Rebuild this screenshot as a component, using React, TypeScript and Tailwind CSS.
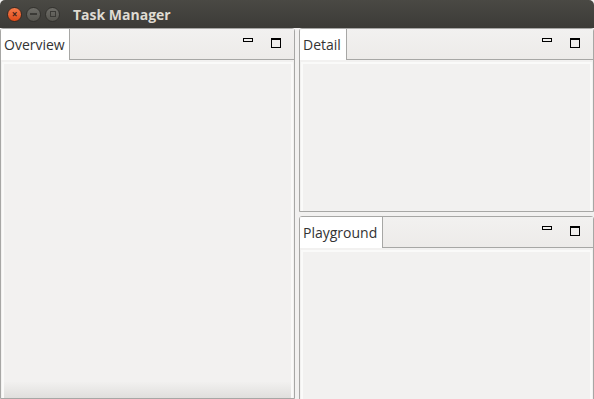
const WinIcons = () => (
  <div className="flex items-start gap-[18px] pt-[9px] pr-[13px]">
    <div className="w-[10px] h-[4px] border border-black" />
    <div className="w-[10px] h-[10px] border border-black border-t-2" />
  </div>
);

const Pane = ({
  title,
  tabWidth,
  className,
  shade,
}: {
  title: string;
  tabWidth: string;
  className: string;
  shade?: boolean;
}) => (
  <div className={`flex flex-col shrink-0 border border-[#a7a7a5] rounded-t-[3px] bg-[#f2f1f0] ${className}`}>
    <div className="flex h-[31px] shrink-0 border-b border-[#a7a7a5] bg-gradient-to-b from-[#f2f1f0] to-[#edebe9]">
      <div
        className={`${tabWidth} h-[31px] bg-white border-r border-[#a7a7a5] rounded-tl-[3px] flex items-center pl-[3px] text-[14px] text-[#333333] -mb-px`}
      >
        {title}
      </div>
      <div className="flex-1" />
      <WinIcons />
    </div>
    <div
      className={`flex-1 mt-[2px] mx-px border-2 border-[#fafaf9] border-b-0 ${
        shade ? "bg-gradient-to-b from-[#f2f1f0] from-[95%] to-[#e0dfdd]" : "bg-[#f2f1f0]"
      }`}
    />
  </div>
);

export default function App() {
  return (
    <div
      className="w-[594px] h-[399px] overflow-hidden flex flex-col bg-[#f2f1f0]"
      style={{ fontFamily: '"Open Sans", "Noto Sans", sans-serif' }}
    >
      <div className="h-[28px] shrink-0 flex items-center bg-gradient-to-b from-[#4a4944] to-[#3c3b37] rounded-t-[5px]">
        <div className="flex gap-[4px] pl-[7px]">
          <div className="w-[15px] h-[15px] rounded-full bg-gradient-to-b from-[#f47b4a] to-[#df4a16] border border-[#3a2a22] flex items-center justify-center text-[10px] leading-none text-[#41231a] font-bold">
            ×
          </div>
          <div className="w-[15px] h-[15px] rounded-full bg-gradient-to-b from-[#6e6d68] to-[#56554f] border border-[#33322e] flex items-center justify-center">
            <div className="w-[7px] h-[2px] bg-[#3b3a36]" />
          </div>
          <div className="w-[15px] h-[15px] rounded-full bg-gradient-to-b from-[#6e6d68] to-[#56554f] border border-[#33322e] flex items-center justify-center">
            <div className="w-[6px] h-[6px] border border-[#3b3a36]" />
          </div>
        </div>
        <div className="ml-[13px] text-[14px] font-bold text-[#dfdbd2]">Task Manager</div>
      </div>
      <div className="flex-1 flex gap-[4px] min-h-0">
        <Pane title="Overview" tabWidth="w-[69px]" className="w-[295px] h-[371px]" shade />
        <div className="flex-1 flex flex-col gap-[4px]">
          <Pane title="Detail" tabWidth="w-[47px]" className="h-[184px]" />
          <Pane title="Playground" tabWidth="w-[83px]" className="h-[190px]" />
        </div>
      </div>
    </div>
  );
}
